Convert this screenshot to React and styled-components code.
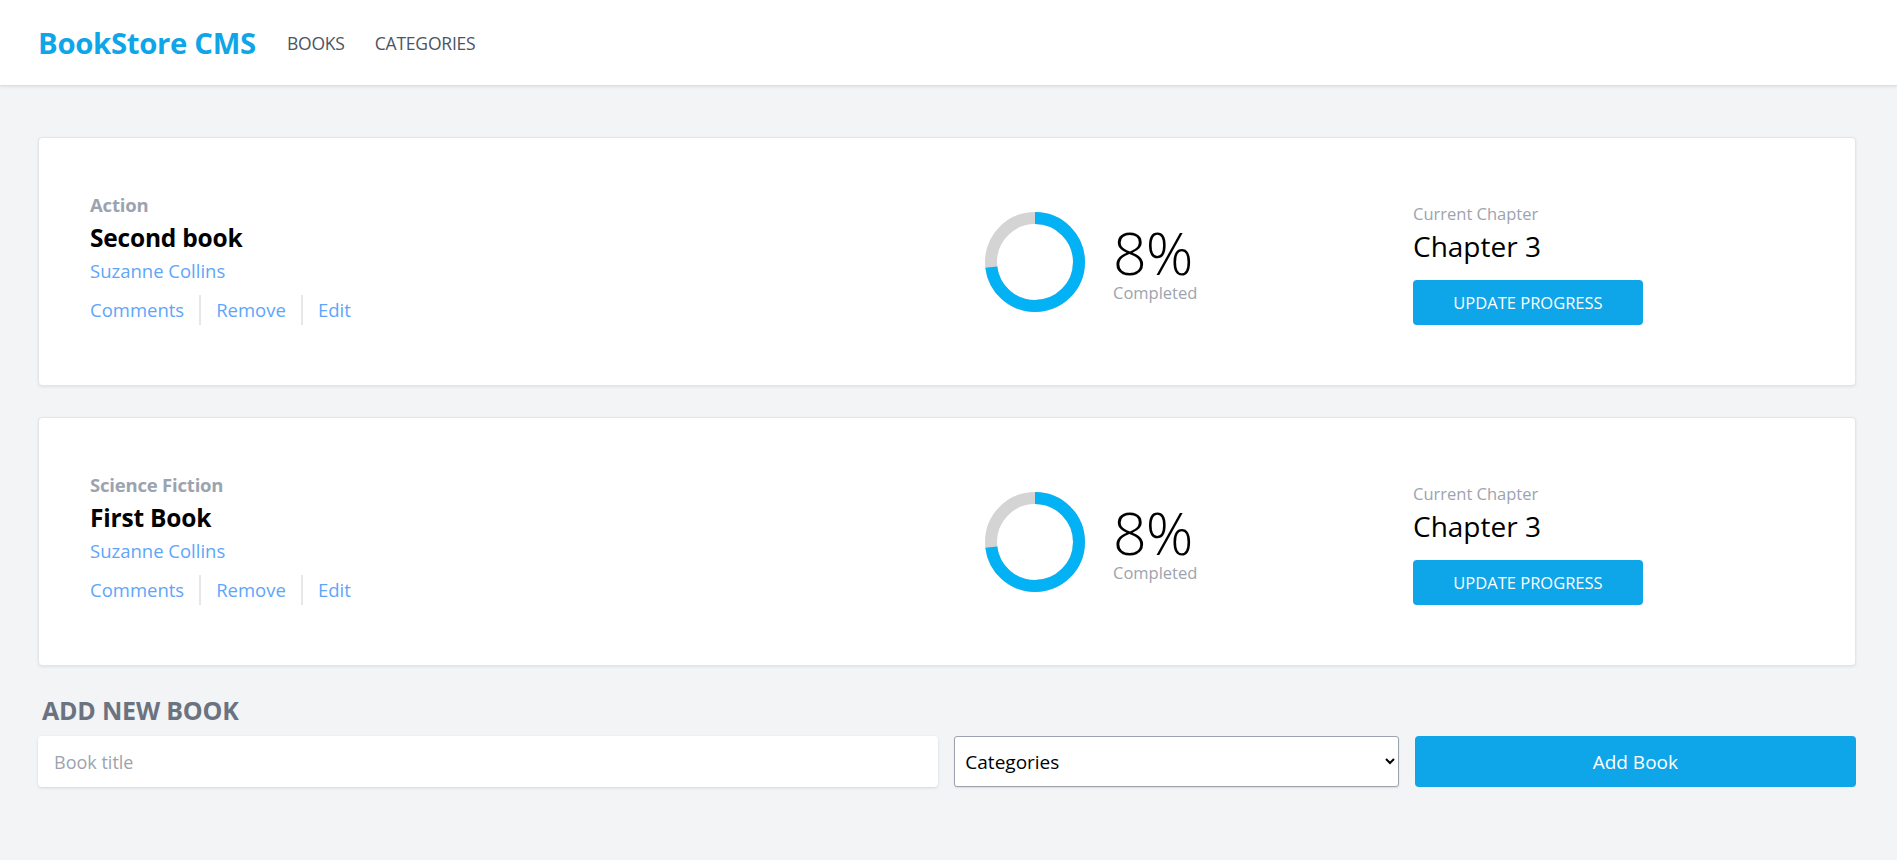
import React from "react";
import styled, { createGlobalStyle } from "styled-components";

const GlobalStyle = createGlobalStyle`
  * {
    box-sizing: border-box;
  }

  body {
    margin: 0;
    background: #f3f4f6;
    font-family: "Open Sans", "Noto Sans", sans-serif;
  }
`;

const Page = styled.div`
  min-height: 860px;
  background: #f3f4f6;
`;

const Header = styled.header`
  height: 86px;
  background: #fff;
  display: flex;
  align-items: center;
  gap: 30px;
  padding: 0 38px;
  border-bottom: 1px solid #dcdee2;
  box-shadow: 0 1px 3px rgba(0, 0, 0, 0.08);
`;

const Logo = styled.h1`
  margin: 0 1px 0 0;
  font-size: 29.3px;
  font-weight: 700;
  color: #0ea5e9;
  letter-spacing: -0.3px;
`;

const NavLink = styled.a`
  font-size: 17.5px;
  color: #4b5563;
  text-transform: uppercase;
  text-decoration: none;
  letter-spacing: -0.2px;
  cursor: pointer;
`;

const Main = styled.main`
  padding: 51px 41px 0 38px;
  display: flex;
  flex-direction: column;
`;

const BookList = styled.ul`
  list-style: none;
  margin: 0;
  padding: 0;
  display: flex;
  flex-direction: column;
  gap: 31px;
`;

const Card = styled.li`
  height: 249px;
  background: #fff;
  border: 1px solid #e3e5e8;
  border-radius: 4px;
  box-shadow: 0 1px 3px rgba(0, 0, 0, 0.08);
  padding: 0 50px 0 51px;
  display: grid;
  grid-template-columns: 1fr 428px 392px;
  align-items: center;
`;

const Info = styled.div`
  display: flex;
  flex-direction: column;
  padding-bottom: 8px;
`;

const Category = styled.span`
  font-size: 18.5px;
  font-weight: 700;
  color: #9ca3af;
  line-height: 28px;
  letter-spacing: -0.2px;
`;

const Title = styled.h2`
  margin: 0;
  font-size: 24.5px;
  font-weight: 700;
  color: #000;
  line-height: 38px;
  letter-spacing: -0.2px;
`;

const Author = styled.span`
  font-size: 18.5px;
  color: #60a5fa;
  line-height: 28px;
`;

const Actions = styled.div`
  display: flex;
  align-items: center;
  margin-top: 10px;
`;

const ActionLink = styled.button`
  background: none;
  border: none;
  padding: 0 15px;
  height: 30px;
  font-family: inherit;
  font-size: 18.5px;
  color: #60a5fa;
  cursor: pointer;
  border-left: 2px solid #e5e7eb;

  &:first-child {
    padding-left: 0;
    border-left: none;
  }
`;

const Progress = styled.div`
  display: flex;
  align-items: center;
  gap: 28px;
`;

const Percent = styled.div`
  display: flex;
  flex-direction: column;
`;

const PercentValue = styled.span`
  font-size: 59px;
  font-weight: 300;
  line-height: 62px;
  color: #000;
  letter-spacing: -1px;
`;

const PercentLabel = styled.span`
  font-size: 16.5px;
  color: #9ca3af;
  line-height: 20px;
`;

const Chapter = styled.div`
  display: flex;
  flex-direction: column;
  padding-top: 5px;
`;

const ChapterLabel = styled.span`
  font-size: 16.5px;
  color: #9ca3af;
  line-height: 20px;
`;

const ChapterValue = styled.span`
  margin-top: 4px;
  font-size: 28px;
  color: #000;
  line-height: 36px;
`;

const PrimaryButton = styled.button`
  width: ${(p) => p.width || "auto"};
  height: ${(p) => p.height || "45px"};
  margin-top: ${(p) => p.offset || "0"};
  background: #0ea5e9;
  border: none;
  border-radius: 4px;
  color: #fff;
  font-family: inherit;
  font-size: ${(p) => p.size || "16.5px"};
  text-transform: ${(p) => (p.upper ? "uppercase" : "none")};
  cursor: pointer;
`;

const FormSection = styled.section`
  margin-top: 28px;
`;

const FormTitle = styled.h3`
  margin: 0 0 0 4px;
  font-size: 25px;
  font-weight: 700;
  color: #6b7280;
  line-height: 32px;
  letter-spacing: -0.2px;
`;

const Form = styled.form`
  margin-top: 10px;
  display: flex;
  gap: 16px;
`;

const TitleInput = styled.input`
  flex: 898 1 0;
  height: 51px;
  border: none;
  border-radius: 4px;
  box-shadow: 0 1px 3px rgba(0, 0, 0, 0.12);
  padding: 0 16px;
  font-family: inherit;
  font-size: 18px;
  outline: none;

  &::placeholder {
    color: #9ca3af;
  }
`;

const Select = styled.select`
  flex: 445 1 0;
  height: 51px;
  border: 1px solid #9ca3af;
  border-radius: 3px;
  background: #fff;
  padding: 0 6px;
  font-family: inherit;
  font-size: 19px;
  color: #000;
  box-shadow: 0 1px 2px rgba(0, 0, 0, 0.1);
`;

const AddButton = styled(PrimaryButton)`
  flex: 444 1 0;
`;

const RingSvg = styled.svg`
  flex: none;
  display: block;
`;

const Ring = ({ ratio }) => {
  const r = 44;
  const c = 2 * Math.PI * r;
  return (
    <RingSvg width="100" height="100" viewBox="0 0 100 100">
      <circle cx="50" cy="50" r={r} fill="none" stroke="#d4d4d4" strokeWidth="12" />
      <circle
        cx="50"
        cy="50"
        r={r}
        fill="none"
        stroke="#03b1f5"
        strokeWidth="12"
        strokeDasharray={`${c * ratio} ${c}`}
        transform="rotate(-90 50 50)"
      />
    </RingSvg>
  );
};

const books = [
  { id: 1, category: "Action", title: "Second book", author: "Suzanne Collins" },
  { id: 2, category: "Science Fiction", title: "First Book", author: "Suzanne Collins" },
];

const App = () => (
  <Page>
    <GlobalStyle />
    <Header>
      <Logo>BookStore CMS</Logo>
      <NavLink>Books</NavLink>
      <NavLink>Categories</NavLink>
    </Header>

    <Main>
      <BookList>
        {books.map((book) => (
          <Card key={book.id}>
            <Info>
              <Category>{book.category}</Category>
              <Title>{book.title}</Title>
              <Author>{book.author}</Author>
              <Actions>
                <ActionLink>Comments</ActionLink>
                <ActionLink>Remove</ActionLink>
                <ActionLink>Edit</ActionLink>
              </Actions>
            </Info>

            <Progress>
              <Ring ratio={0.73} />
              <Percent>
                <PercentValue>8%</PercentValue>
                <PercentLabel>Completed</PercentLabel>
              </Percent>
            </Progress>

            <Chapter>
              <ChapterLabel>Current Chapter</ChapterLabel>
              <ChapterValue>Chapter 3</ChapterValue>
              <PrimaryButton width="230px" offset="16px" upper>
                Update progress
              </PrimaryButton>
            </Chapter>
          </Card>
        ))}
      </BookList>

      <FormSection>
        <FormTitle>ADD NEW BOOK</FormTitle>
        <Form onSubmit={(e) => e.preventDefault()}>
          <TitleInput type="text" placeholder="Book title" />
          <Select defaultValue="">
            <option value="">Categories</option>
            <option value="action">Action</option>
            <option value="scifi">Science Fiction</option>
          </Select>
          <AddButton type="submit" height="51px" size="19px">
            Add Book
          </AddButton>
        </Form>
      </FormSection>
    </Main>
  </Page>
);

export default App;
